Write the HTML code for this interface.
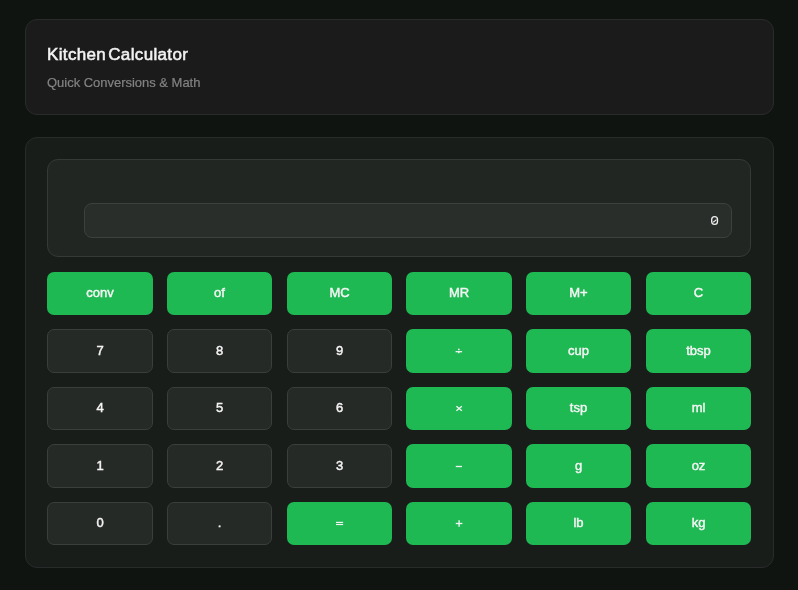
<!DOCTYPE html>
<html>
<head>
<meta charset="utf-8">
<style>
html,body{margin:0;padding:0;}
body{width:798px;height:590px;overflow:hidden;background:#101411;font-family:"Liberation Sans",sans-serif;position:relative;}
.card{position:absolute;box-sizing:border-box;border:1px solid #282b29;border-radius:12px;}
.hdr{left:25px;top:19px;width:749px;height:96px;background:#1b1b1b;}
.hdr h1{will-change:transform;position:absolute;left:21px;top:25px;margin:0;font-size:17px;font-weight:normal;-webkit-text-stroke:0.55px #f2f2f2;color:#f2f2f2;letter-spacing:0.35px;word-spacing:-3px;white-space:nowrap;}
.hdr p{will-change:transform;position:absolute;left:20.7px;top:55px;margin:0;font-size:13px;color:#838383;-webkit-text-stroke:0.2px #838383;letter-spacing:-0.02px;white-space:nowrap;}
.calc{left:25px;top:137px;width:749px;height:431px;background:#191d1a;}
.disp{position:absolute;left:47px;top:159px;width:704px;height:98px;box-sizing:border-box;border:1px solid #363a37;border-radius:11px;background:#222623;}
.scr{position:absolute;left:84px;top:203px;width:648px;height:35px;box-sizing:border-box;border:1px solid #3d413e;border-radius:8px;background:#2a2e2b;}
.btns{position:absolute;left:0;top:0;width:798px;height:590px;will-change:transform;}
.b{position:absolute;box-sizing:border-box;border-radius:7px;padding-bottom:2px;display:flex;align-items:center;justify-content:center;font-size:13px;font-weight:normal;-webkit-text-stroke:0.45px #f4f4f4;color:#f4f4f4;white-space:nowrap;}
.g{background:#1fb954;}
.d{background:#262a27;border:1px solid #3b3f3c;}
.ov{position:absolute;left:0;top:0;}
</style>
</head>
<body>
<div class="card hdr">
<h1>Kitchen Calculator</h1>
<p>Quick Conversions &amp; Math</p>
</div>
<div class="card calc"></div>
<div class="disp"></div>
<div class="scr"></div>
<div class="btns">
<div class="b g" style="left:47px;top:272px;width:106px;height:43px">conv</div>
<div class="b g" style="left:167px;top:272px;width:105px;height:43px">of</div>
<div class="b g" style="left:287px;top:272px;width:105px;height:43px">MC</div>
<div class="b g" style="left:406px;top:272px;width:106px;height:43px">MR</div>
<div class="b g" style="left:526px;top:272px;width:105px;height:43px">M+</div>
<div class="b g" style="left:646px;top:272px;width:105px;height:43px">C</div>
<div class="b d" style="left:47px;top:329px;width:106px;height:44px">7</div>
<div class="b d" style="left:167px;top:329px;width:105px;height:44px">8</div>
<div class="b d" style="left:287px;top:329px;width:105px;height:44px">9</div>
<div class="b g" style="left:406px;top:329px;width:106px;height:44px"></div>
<div class="b g" style="left:526px;top:329px;width:105px;height:44px">cup</div>
<div class="b g" style="left:646px;top:329px;width:105px;height:44px">tbsp</div>
<div class="b d" style="left:47px;top:387px;width:106px;height:43px">4</div>
<div class="b d" style="left:167px;top:387px;width:105px;height:43px">5</div>
<div class="b d" style="left:287px;top:387px;width:105px;height:43px">6</div>
<div class="b g" style="left:406px;top:387px;width:106px;height:43px"></div>
<div class="b g" style="left:526px;top:387px;width:105px;height:43px">tsp</div>
<div class="b g" style="left:646px;top:387px;width:105px;height:43px">ml</div>
<div class="b d" style="left:47px;top:444px;width:106px;height:44px">1</div>
<div class="b d" style="left:167px;top:444px;width:105px;height:44px">2</div>
<div class="b d" style="left:287px;top:444px;width:105px;height:44px">3</div>
<div class="b g" style="left:406px;top:444px;width:106px;height:44px"></div>
<div class="b g" style="left:526px;top:444px;width:105px;height:44px">g</div>
<div class="b g" style="left:646px;top:444px;width:105px;height:44px">oz</div>
<div class="b d" style="left:47px;top:502px;width:106px;height:43px">0</div>
<div class="b d" style="left:167px;top:502px;width:105px;height:43px">.</div>
<div class="b g" style="left:287px;top:502px;width:105px;height:43px"></div>
<div class="b g" style="left:406px;top:502px;width:106px;height:43px"></div>
<div class="b g" style="left:526px;top:502px;width:105px;height:43px">lb</div>
<div class="b g" style="left:646px;top:502px;width:105px;height:43px">kg</div>
</div>
<svg class="ov" width="798" height="590" viewBox="0 0 798 590" fill="#f4f4f4">
<rect x="455.58" y="351.05" width="6.5" height="1.25"/><circle cx="458.83" cy="349.45" r="0.85"/><circle cx="458.83" cy="352.6" r="0.8"/>
<path d="M456.43 406.15 L461.83 410.85 M461.83 406.15 L456.43 410.85" stroke="#f4f4f4" stroke-width="1.35" fill="none"/>
<rect x="455.78" y="465.85" width="6.2" height="1.3"/>
<rect x="455.78" y="522.85" width="6.6" height="1.3"/><rect x="458.43" y="520.2" width="1.3" height="6.6"/>
<rect x="336.02" y="521.8" width="7.1" height="1.2"/><rect x="336.02" y="523.9" width="7.1" height="1.2"/>
<rect x="711.7" y="216.6" width="5.8" height="7.7" rx="2.9" fill="none" stroke="#f0f0f0" stroke-width="1.3"/><path d="M713.2 222.3 L716.5 219.6" stroke="#f0f0f0" stroke-width="1.1"/>
</svg>
</body>
</html>
